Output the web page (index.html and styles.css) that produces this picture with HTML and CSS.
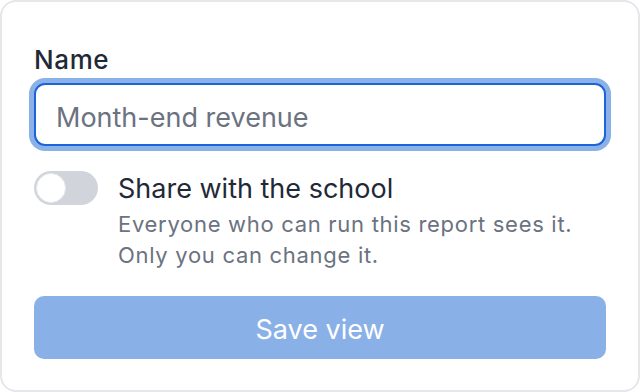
FILE: index.html
```html
<!DOCTYPE html>
<html lang="en">
<head>
    <meta charset="UTF-8">
    <meta name="viewport" content="width=device-width, initial-scale=1.0">
    <title>Save view</title>
    <link rel="stylesheet" href="styles.css">
</head>
<body>
    <div class="card">
        <label class="field-label" for="view-name">Name</label>
        <input class="field-input" id="view-name" type="text" placeholder="Month-end revenue" autofocus>

        <div class="share-row">
            <span class="toggle"><span class="toggle-knob"></span></span>
            <div class="share-text">
                <div class="share-title">Share with the school</div>
                <div class="share-desc">Everyone who can run this report sees it.<br>Only you can change it.</div>
            </div>
        </div>

        <button class="save-btn" disabled>Save view</button>
    </div>
</body>
</html>
```

FILE: styles.css
```css
* {
    margin: 0;
    padding: 0;
    box-sizing: border-box;
}

body {
    font-family: 'Inter', 'Liberation Sans', sans-serif;
    background-color: #fff;
    color: #1f2937;
}

.card {
    width: 640px;
    height: 392px;
    border: 2px solid #e5e7eb;
    border-radius: 16px;
    padding: 42px 32px 30px;
    display: flex;
    flex-direction: column;
}

.field-label {
    display: block;
    font-size: 26px;
    line-height: 32px;
    font-weight: 500;
    letter-spacing: 0.6px;
    color: #1f2937;
    margin-bottom: 7px;
}

.field-input {
    width: 100%;
    height: 63px;
    padding: 5px 20px 0;
    border: 2px solid #1d64d8;
    border-radius: 11px;
    box-shadow: 0 0 0 5px #8ab1e8;
    font-family: inherit;
    font-size: 27px;
    color: #1f2937;
    outline: none;
}

.field-input::placeholder {
    color: #6b7280;
}

.share-row {
    display: flex;
    align-items: flex-start;
    gap: 20px;
    margin-top: 25px;
}

.toggle {
    flex: none;
    width: 64px;
    height: 34px;
    border-radius: 17px;
    background-color: #d1d5db;
    padding: 2px;
}

.toggle-knob {
    display: block;
    width: 30px;
    height: 30px;
    border-radius: 50%;
    background-color: #fff;
    border: 1px solid #e5e7eb;
}

.share-text {
    padding-top: 3px;
}

.share-title {
    font-size: 27px;
    line-height: 30px;
    color: #1f2937;
    margin-bottom: 5px;
}

.share-desc {
    font-size: 22px;
    line-height: 31px;
    letter-spacing: 0.7px;
    color: #6b7280;
}

.save-btn {
    margin-top: 25px;
    width: 100%;
    height: 63px;
    padding-top: 4px;
    border: none;
    border-radius: 10px;
    background-color: #8ab0e8;
    color: #fff;
    font-family: inherit;
    font-size: 27px;
}
```
